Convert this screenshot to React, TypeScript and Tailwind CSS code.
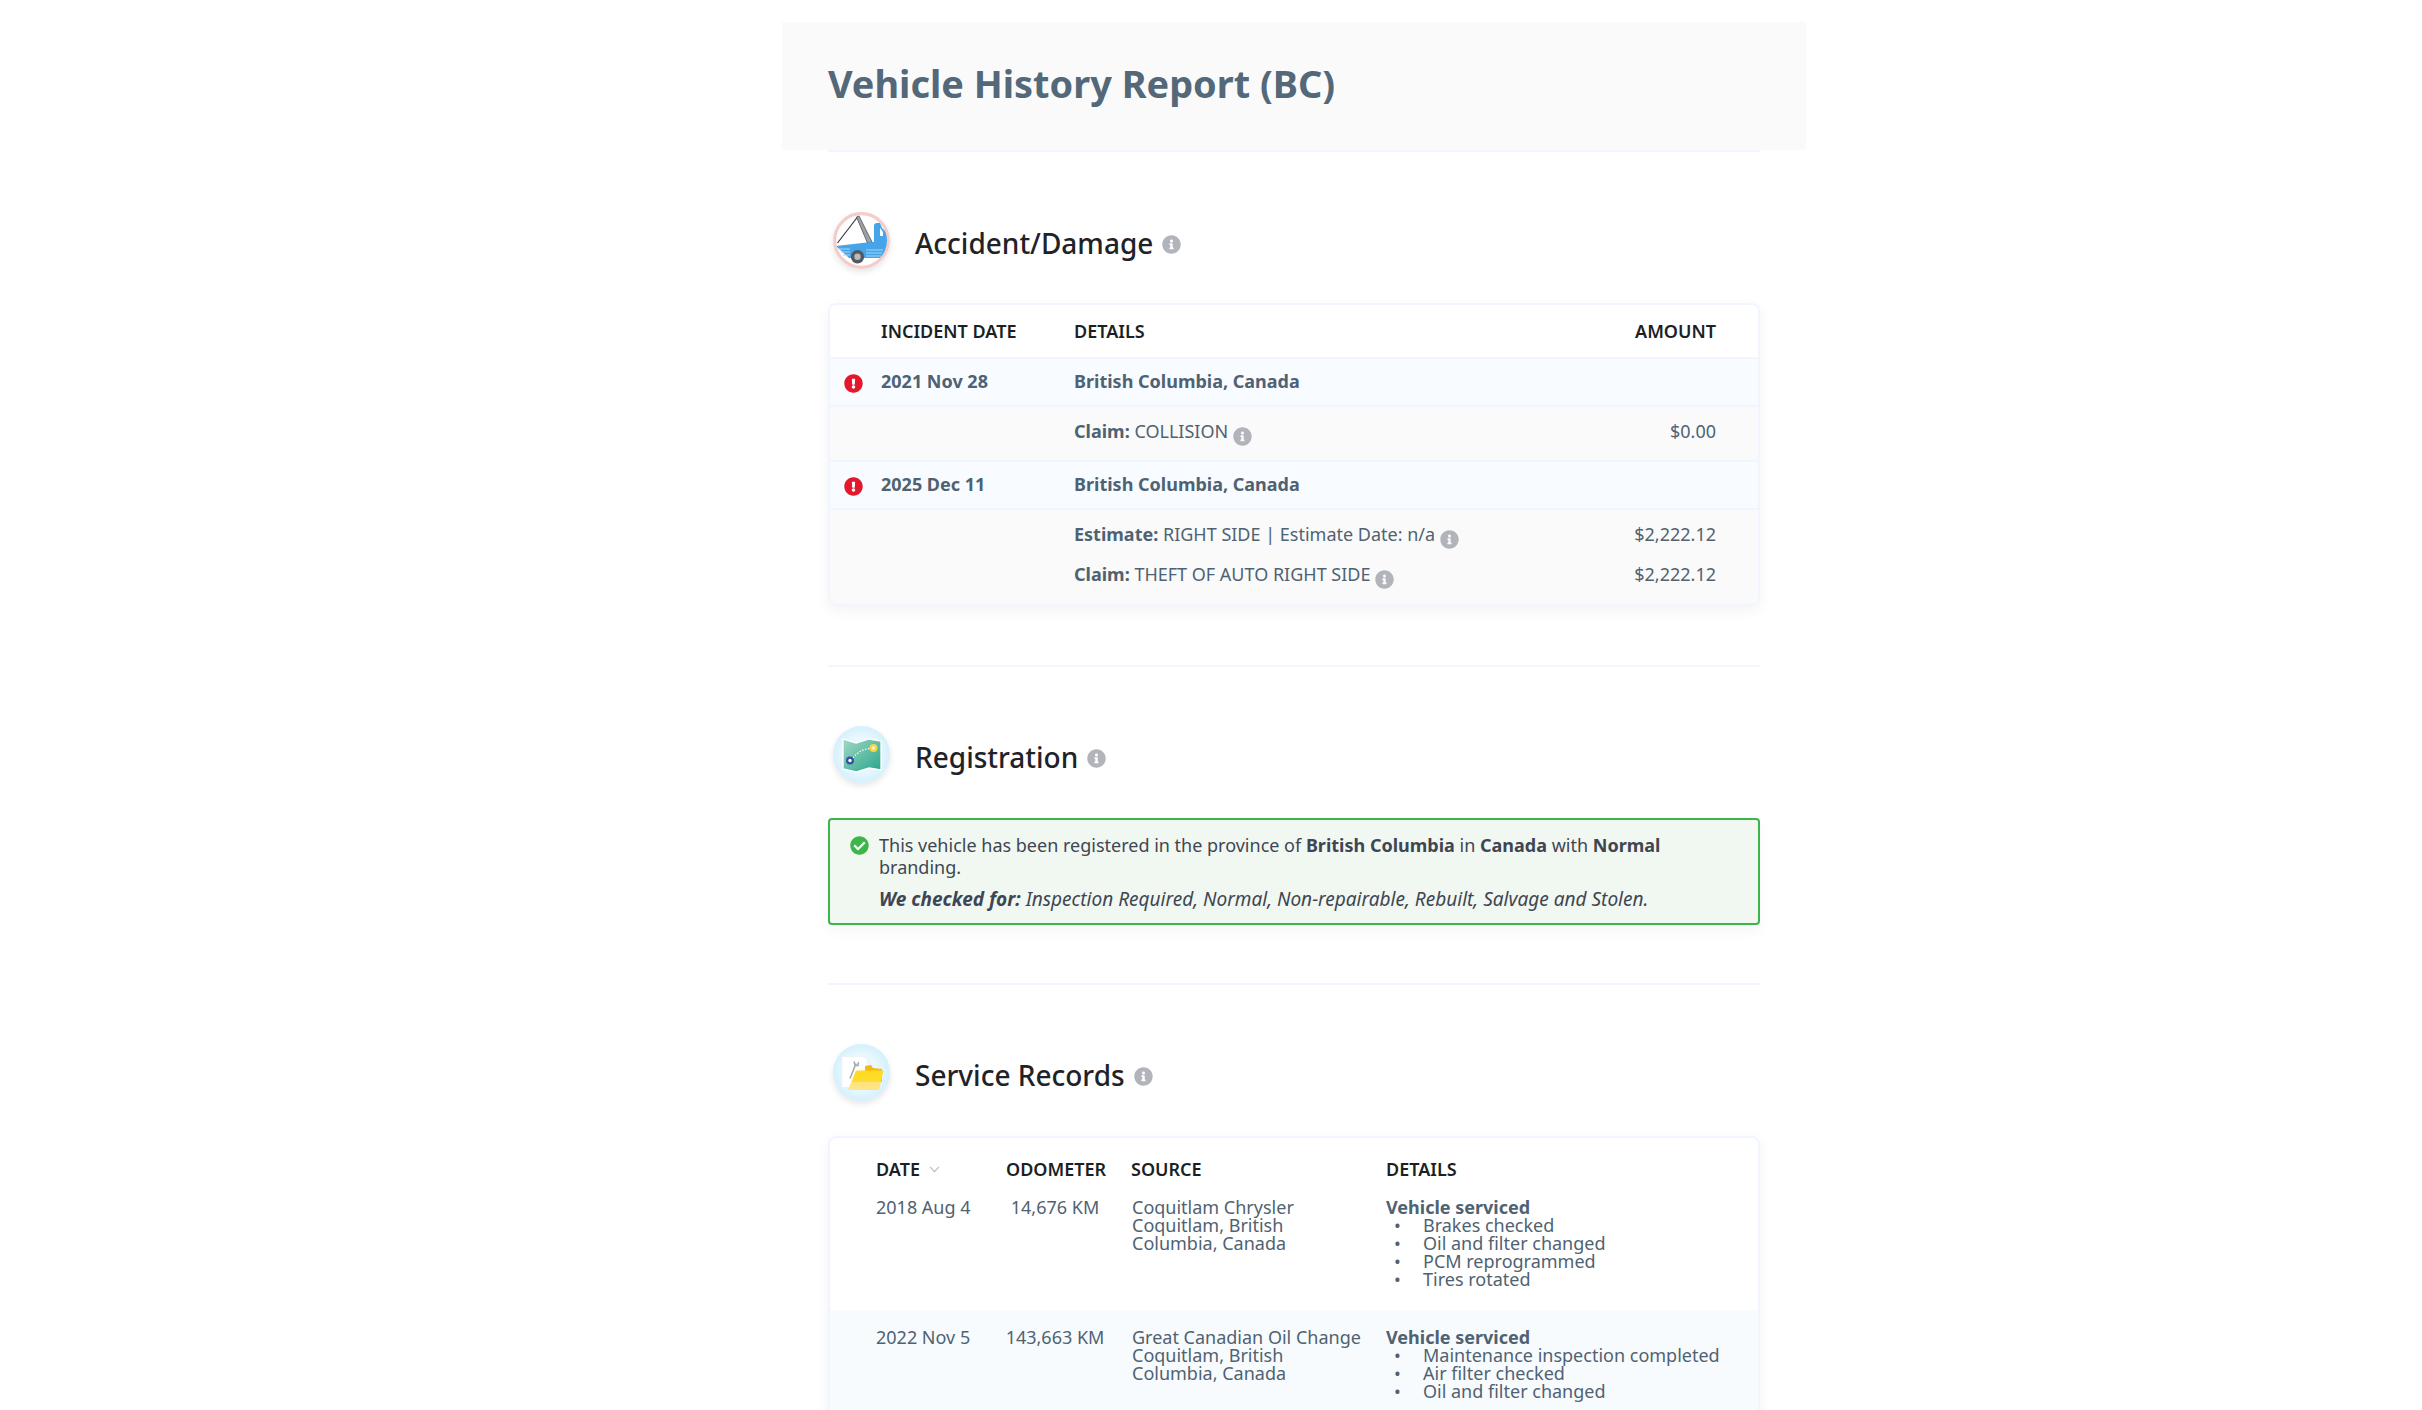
import React from "react";
import { FaInfoCircle, FaExclamationCircle, FaCheckCircle } from "react-icons/fa";

function Info({ className = "" }: { className?: string }) {
  return <FaInfoCircle className={"inline-block text-[#b1b5bb] " + className} size={19} />;
}

function TowIcon() {
  return (
    <svg viewBox="0 0 57 57" className="h-full w-full blur-[0.5px]">
      <defs>
        <clipPath id="towclip"><circle cx="28.5" cy="28.5" r="25.5" /></clipPath>
      </defs>
      <circle cx="28.5" cy="28.5" r="26.8" fill="#ffffff" stroke="#f3cdca" strokeWidth="3.2" />
      <g clipPath="url(#towclip)">
        <path d="M24.5 5 L4.5 31" stroke="#33363b" strokeWidth="1.2" fill="none" />
        <path d="M23.5 5 L26 4 L39 30 L34.5 31 Z" fill="#9da3a9" stroke="#4b5055" strokeWidth="0.8" />
        <path d="M3 34 L38 30 L41 30 L41 14 Q41 11 44 11 L47 11 L49 16 L53 20 L55 30 L52 46 L16 46 Z" fill="#46a5ea" />
        <path d="M47 16 L50 20 L50 24 L47 24 Z" fill="#ffffff" />
        <path d="M6 37 L17 37 M8 40 L17 40 M10 43 L17 43 M33 38 L50 38 M33 41 L49 41 M33 44 L48 44" stroke="#a7d4f5" strokeWidth="1" />
        <circle cx="24.5" cy="44.7" r="6.7" fill="#55595e" />
        <circle cx="24.5" cy="44.7" r="3.2" fill="#b7bbbf" />
      </g>
    </svg>
  );
}

function MapIcon() {
  return (
    <svg viewBox="0 0 57 57" className="h-full w-full blur-[0.5px]">
      <defs>
        <linearGradient id="mapg" x1="0" y1="0" x2="1" y2="1">
          <stop offset="0" stopColor="#a3d8c4" />
          <stop offset="1" stopColor="#26a58a" />
        </linearGradient>
        <radialGradient id="bub1">
          <stop offset="0.6" stopColor="#e9f8fe" />
          <stop offset="1" stopColor="#d5f0fc" />
        </radialGradient>
      </defs>
      <circle cx="28.5" cy="28.5" r="28.5" fill="url(#bub1)" />
      <path d="M10 13 L23 17 L36 13 L48 15 L48 44 L36 42 L23 46 L10 43 Z" fill="url(#mapg)" stroke="#ffffff" strokeWidth="1.3" />
      <path d="M20 32 Q27 23 37 22.5" stroke="#ffffff" strokeWidth="1.2" strokeDasharray="1.5 1.5" fill="none" />
      <circle cx="17" cy="34.5" r="4" fill="#3350ab" />
      <circle cx="17" cy="34.5" r="1.7" fill="#ffffff" />
      <circle cx="40.5" cy="22" r="4" fill="#f6d648" />
      <circle cx="40.5" cy="22" r="1.7" fill="#fdf3c4" />
    </svg>
  );
}

function FolderIcon() {
  return (
    <svg viewBox="0 0 57 57" className="h-full w-full blur-[0.5px]">
      <defs>
        <radialGradient id="bub2">
          <stop offset="0.6" stopColor="#e9f8fe" />
          <stop offset="1" stopColor="#d5f0fc" />
        </radialGradient>
        <linearGradient id="foldg" x1="0" y1="0" x2="0" y2="1">
          <stop offset="0" stopColor="#ffd91e" />
          <stop offset="0.6" stopColor="#ffdc33" />
          <stop offset="0.61" stopColor="#ffe27c" />
          <stop offset="1" stopColor="#ffe488" />
        </linearGradient>
      </defs>
      <circle cx="28.5" cy="28.5" r="28.5" fill="url(#bub2)" />
      <path d="M9 12.5 L30 12.5 L34 16 L34 43.5 L9 43.5 Z" fill="#ffffff" stroke="#e4edf2" strokeWidth="0.5" />
      <path d="M17 34.5 L23 19.5 M21 17.5 L22 21 L25 21.5 L25.5 18" stroke="#a3abb3" strokeWidth="1.6" fill="none" />
      <path d="M32 22 L38 21 L40 24 L49 25 L49 38 L32 38 Z" fill="#f7b90f" />
      <path d="M23 26.5 L50.5 26.5 L46 46 L15 46 Z" fill="url(#foldg)" />
    </svg>
  );
}

function SectionHead({ title, children }: { title: string; children: React.ReactNode }) {
  return (
    <div className="flex items-center pl-[5px]">
      <div className="h-[57px] w-[57px] rounded-full shadow-[0_3px_6px_rgba(0,0,0,0.1)]">{children}</div>
      <h2 className="ml-[25px] translate-y-[2px] text-[28px] font-medium leading-[40px] text-[#1f2328]">{title}</h2>
      <Info className="ml-[9px] translate-y-[4px]" />
    </div>
  );
}

function AccidentHead({ date, place }: { date: string; place: string }) {
  return (
    <div className="flex h-[48px] items-center border-b-2 border-[#f1f5fd] bg-[#f8fbff] font-bold">
      <div className="flex w-[51px] justify-end pr-[18px]">
        <FaExclamationCircle size={19} className="translate-y-[1px] text-[#e5172b]" />
      </div>
      <div className="w-[193px] -translate-y-[1px]">{date}</div>
      <div className="-translate-y-[1px]">{place}</div>
    </div>
  );
}

function DetailRow({ label, text, amount }: { label: string; text: string; amount: string }) {
  return (
    <div className="flex items-center">
      <div className="w-[244px]" />
      <div className="grow">
        <span className="font-bold">{label}</span> {text}
        <Info className="ml-[5px] translate-y-[3px]" />
      </div>
      <div className="pr-[42px] text-right">{amount}</div>
    </div>
  );
}

function ServiceRow({ date, odo, source, place, items, tint }: { date: string; odo: string; source: string; place: string; items: string[]; tint?: boolean }) {
  return (
    <div className={"flex pb-[22px] pt-[18px] leading-[18px] " + (tint ? "bg-[#f8fbfe]" : "")}>
      <div className="w-[174px] pl-[46px]">{date}</div>
      <div className="w-[102px] whitespace-nowrap text-center">{odo}</div>
      <div className="ml-[26px] w-[254px] pr-[24px]">
        <div>{source}</div>
        <div className="w-[180px]">{place}</div>
      </div>
      <div>
        <div className="font-bold">Vehicle serviced</div>
        <ul>
          {items.map((t) => (
            <li key={t} className="flex">
              <span className="w-[37px] pl-[8px]">•</span>
              <span>{t}</span>
            </li>
          ))}
        </ul>
      </div>
    </div>
  );
}

export default function App() {
  return (
    <div className="h-[1410px] w-full overflow-hidden bg-white pt-[22px] font-['Noto_Sans',sans-serif] text-[18px] text-[#4f6272]">
      <div className="ml-[782px] w-[1024px]">
        <header className="flex h-[128px] items-center bg-[#fafafa] pl-[46px]">
          <h1 className="-translate-y-[3px] text-[37.9px] font-bold leading-[48px] text-[#536878]">Vehicle History Report (BC)</h1>
        </header>
        <div className="px-[46px]">
          <div className="h-[2px] bg-[#f1f5fd]" />

          <section className="pt-[60px]">
            <SectionHead title="Accident/Damage"><TowIcon /></SectionHead>
            <div className="mt-[34px] overflow-hidden rounded-[8px] border-2 border-[#f1f5fd] shadow-[0_4px_14px_rgba(0,0,0,0.05)]">
              <div className="flex h-[54px] items-center border-b-2 border-[#f1f5fd] bg-white font-semibold text-[#1c1f24]">
                <div className="w-[51px]" />
                <div className="w-[193px]">INCIDENT DATE</div>
                <div className="grow">DETAILS</div>
                <div className="pr-[42px]">AMOUNT</div>
              </div>
              <AccidentHead date="2021 Nov 28" place="British Columbia, Canada" />
              <div className="flex h-[55px] flex-col justify-center border-b-2 border-[#f1f5fd] bg-[#fafafa] pb-[4px]">
                <DetailRow label="Claim:" text="COLLISION" amount="$0.00" />
              </div>
              <AccidentHead date="2025 Dec 11" place="British Columbia, Canada" />
              <div className="flex h-[94px] flex-col gap-[13px] bg-[#fafafa] pt-[11px]">
                <DetailRow label="Estimate:" text="RIGHT SIDE | Estimate Date: n/a" amount="$2,222.12" />
                <DetailRow label="Claim:" text="THEFT OF AUTO RIGHT SIDE" amount="$2,222.12" />
              </div>
            </div>
          </section>

          <div className="mt-[59px] h-[2px] bg-[#f1f5fd]" />

          <section className="pt-[59px]">
            <SectionHead title="Registration"><MapIcon /></SectionHead>
            <div className="mt-[35px] flex h-[107px] flex-col rounded-[4px] border-2 border-[#3cb54a] bg-[#f1f8f1] pl-[20px] pr-[40px] pt-[14px] leading-[22px] text-[#3f4653] shadow-[0_6px_14px_rgba(0,0,0,0.04)]">
              <div className="flex">
                <FaCheckCircle size={19} className="mr-[10px] mt-[2px] shrink-0 text-[#3cb54a]" />
                <p>
                  This vehicle has been registered in the province of <b className="font-bold">British Columbia</b> in <b className="font-bold">Canada</b> with <b className="font-bold">Normal</b> branding.
                </p>
              </div>
              <p className="mt-[10px] pl-[29px] text-[19.05px] italic">
                <b className="font-bold">We checked for:</b> Inspection Required, Normal, Non-repairable, Rebuilt, Salvage and Stolen.
              </p>
            </div>
          </section>

          <div className="mt-[58px] h-[2px] bg-[#f1f5fd]" />

          <section className="pt-[59px]">
            <SectionHead title="Service Records"><FolderIcon /></SectionHead>
            <div className="mt-[35px] rounded-[8px] border-2 border-[#f1f5fd] shadow-[0_4px_14px_rgba(0,0,0,0.05)]">
              <div className="flex h-[42px] items-end pb-[1px] font-semibold leading-[20px] text-[#1c1f24]">
                <div className="flex w-[176px] items-center pl-[46px]">
                  DATE
                  <svg viewBox="0 0 12 8" className="ml-[9px] h-[7px] w-[11px]" fill="none" stroke="#b4b9be" strokeWidth="1.2"><path d="M1 1 L6 6.5 L11 1" /></svg>
                </div>
                <div className="w-[125px]">ODOMETER</div>
                <div className="w-[255px]">SOURCE</div>
                <div>DETAILS</div>
              </div>
              <ServiceRow date="2018 Aug 4" odo="14,676 KM" source="Coquitlam Chrysler" place="Coquitlam, British Columbia, Canada" items={["Brakes checked", "Oil and filter changed", "PCM reprogrammed", "Tires rotated"]} />
              <ServiceRow tint date="2022 Nov 5" odo="143,663 KM" source="Great Canadian Oil Change" place="Coquitlam, British Columbia, Canada" items={["Maintenance inspection completed", "Air filter checked", "Oil and filter changed"]} />
            </div>
          </section>
        </div>
      </div>
    </div>
  );
}
